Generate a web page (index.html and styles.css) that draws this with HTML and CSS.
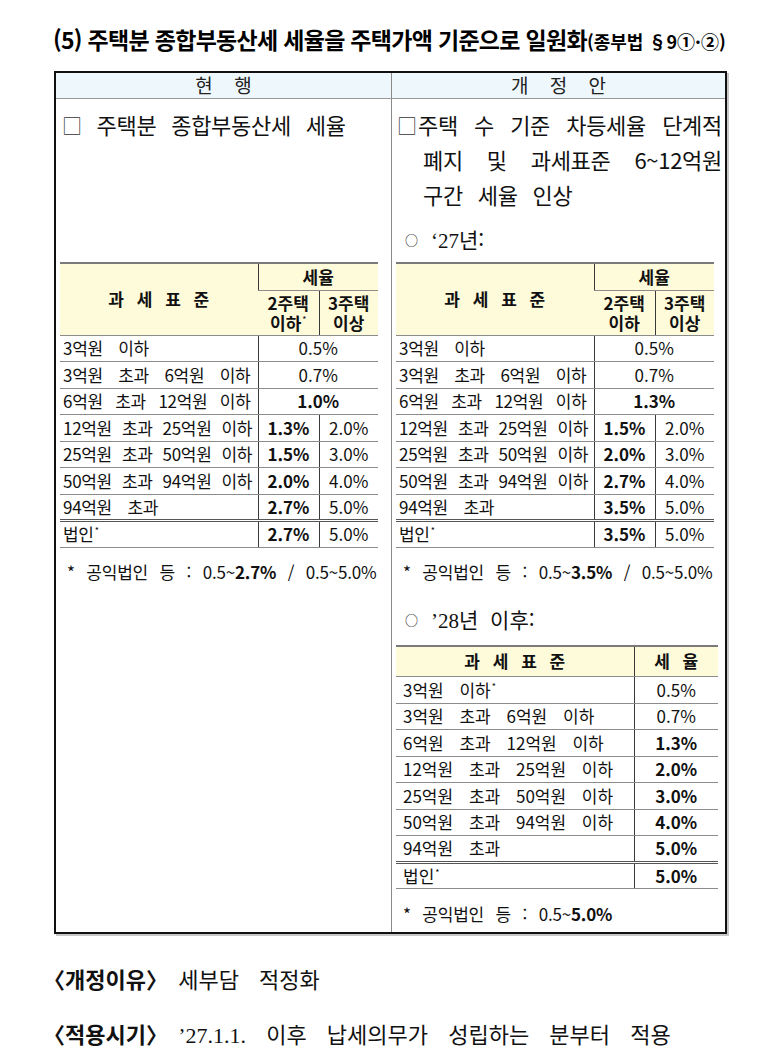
FILE: index.html
```html
<!DOCTYPE html>
<html lang="ko">
<head>
<meta charset="utf-8">
<title>주택분 종합부동산세 세율</title>
<link rel="stylesheet" href="styles.css">
</head>
<body>
<h1 class="title">(5) 주택분 종합부동산세 세율을 주택가액 기준으로 일원화<span class="law">(종부법 §9①·②)</span></h1>

<div class="box">
  <div class="hd">현 행</div>
  <div class="hd r">개 정 안</div>

  <div class="cell intro">
    <p class="lead left"><span class="sq">□</span> 주택분 종합부동산세 세율</p>
  </div>
  <div class="cell r intro">
    <p class="lead j"><span class="sq">□</span>주택 수 기준 차등세율 단계적</p>
    <p class="lead j ind">폐지 및 과세표준 6~12억원</p>
    <p class="lead ind">구간 세율 인상</p>
    <p class="sub"><span class="circ">○</span> <span class="yr">‘27</span>년:</p>
  </div>

  <div class="cell tcell">
    <table class="rt">
      <colgroup><col class="c1"><col class="c2"><col class="c3"></colgroup>
      <tr class="h1"><th rowspan="2" class="sp">과 세 표 준</th><th colspan="2">세율</th></tr>
      <tr class="h2"><th>2주택<br>이하<sup>*</sup></th><th>3주택<br>이상</th></tr>
      <tr><td class="k">3억원 이하</td><td colspan="2">0.5%</td></tr>
      <tr><td class="k">3억원 초과 6억원 이하</td><td colspan="2">0.7%</td></tr>
      <tr><td class="k m">6억원 초과 12억원 이하</td><td colspan="2"><b>1.0%</b></td></tr>
      <tr><td class="k t">12억원 초과 25억원 이하</td><td><b>1.3%</b></td><td>2.0%</td></tr>
      <tr><td class="k t">25억원 초과 50억원 이하</td><td><b>1.5%</b></td><td>3.0%</td></tr>
      <tr><td class="k t">50억원 초과 94억원 이하</td><td><b>2.0%</b></td><td>4.0%</td></tr>
      <tr class="dbl"><td class="k">94억원 초과</td><td><b>2.7%</b></td><td>5.0%</td></tr>
      <tr><td class="k">법인<sup>*</sup></td><td><b>2.7%</b></td><td>5.0%</td></tr>
    </table>
  </div>
  <div class="cell r tcell">
    <table class="rt">
      <colgroup><col class="c1"><col class="c2"><col class="c3"></colgroup>
      <tr class="h1"><th rowspan="2" class="sp">과 세 표 준</th><th colspan="2">세율</th></tr>
      <tr class="h2"><th>2주택<br>이하</th><th>3주택<br>이상</th></tr>
      <tr><td class="k">3억원 이하</td><td colspan="2">0.5%</td></tr>
      <tr><td class="k">3억원 초과 6억원 이하</td><td colspan="2">0.7%</td></tr>
      <tr><td class="k m">6억원 초과 12억원 이하</td><td colspan="2"><b>1.3%</b></td></tr>
      <tr><td class="k t">12억원 초과 25억원 이하</td><td><b>1.5%</b></td><td>2.0%</td></tr>
      <tr><td class="k t">25억원 초과 50억원 이하</td><td><b>2.0%</b></td><td>3.0%</td></tr>
      <tr><td class="k t">50억원 초과 94억원 이하</td><td><b>2.7%</b></td><td>4.0%</td></tr>
      <tr class="dbl"><td class="k">94억원 초과</td><td><b>3.5%</b></td><td>5.0%</td></tr>
      <tr><td class="k">법인<sup>*</sup></td><td><b>3.5%</b></td><td>5.0%</td></tr>
    </table>
  </div>

  <div class="cell note-cell">
    <p class="note">* 공익법인 등 : 0.5~<b>2.7%</b> / 0.5~5.0%</p>
  </div>
  <div class="cell r note-cell">
    <p class="note">* 공익법인 등 : 0.5~<b>3.5%</b> / 0.5~5.0%</p>
  </div>

  <div class="cell last"></div>
  <div class="cell r last">
    <p class="sub s2"><span class="circ">○</span> <span class="yr">’28</span>년 이후:</p>
    <table class="rt2">
      <colgroup><col class="d1"><col class="d2"></colgroup>
      <tr class="hh"><th class="sp">과 세 표 준</th><th class="sp">세 율</th></tr>
      <tr><td class="k">3억원 이하<sup>*</sup></td><td>0.5%</td></tr>
      <tr><td class="k">3억원 초과 6억원 이하</td><td>0.7%</td></tr>
      <tr><td class="k">6억원 초과 12억원 이하</td><td><b>1.3%</b></td></tr>
      <tr><td class="k">12억원 초과 25억원 이하</td><td><b>2.0%</b></td></tr>
      <tr><td class="k">25억원 초과 50억원 이하</td><td><b>3.0%</b></td></tr>
      <tr><td class="k">50억원 초과 94억원 이하</td><td><b>4.0%</b></td></tr>
      <tr class="dbl"><td class="k">94억원 초과</td><td><b>5.0%</b></td></tr>
      <tr><td class="k">법인<sup>*</sup></td><td><b>5.0%</b></td></tr>
    </table>
    <p class="note n2">* 공익법인 등 : 0.5~<b>5.0%</b></p>
  </div>
</div>

<p class="para p1"><span class="lbl"><span class="bo">〈</span>개정이유<span class="bc">〉</span></span> 세부담 적정화</p>
<p class="para p2"><span class="lbl"><span class="bo">〈</span>적용시기<span class="bc">〉</span></span> <span class="yr">’27.1.1.</span> 이후 납세의무가 성립하는 분부터 적용</p>
</body>
</html>
```
FILE: styles.css
```css
* { box-sizing: border-box; }

body {
  margin: 0;
  background: #fff;
  color: #111;
  font-family: "Noto Sans CJK KR", "Noto Sans", sans-serif;
}

p { margin: 0; }

.title {
  margin: 0;
  height: 71px;
  padding: 22px 0 0 53px;
  font-size: 23px;
  line-height: 34px;
  font-weight: 700;
  letter-spacing: -0.7px;
  white-space: nowrap;
  color: #000;
}

.law {
  font-size: 18px;
  letter-spacing: 0;
}

.box {
  margin-left: 54px;
  width: 673px;
  border: 2px solid #111;
  box-shadow: 2px 2px 0 #c8c8c8;
  display: grid;
  grid-template-columns: 335px 334px;
}

.r { border-left: 1px solid #8a8a8a; }

.hd {
  height: 26px;
  background: #eef8fc;
  border-bottom: 1px solid #9a9a9a;
  text-align: center;
  font-size: 19px;
  line-height: 24px;
  word-spacing: 16px;
  color: #222;
}

.intro { padding-top: 8px; padding-bottom: 5px; }

.lead {
  height: 35px;
  font-size: 22px;
  line-height: 35px;
  letter-spacing: -0.3px;
  word-spacing: 9px;
  white-space: nowrap;
}

.lead.left { padding-left: 6px; }

.cell.r .lead { padding-left: 5px; padding-right: 3px; }

.lead.j {
  text-align: justify;
  text-align-last: justify;
  white-space: normal;
}

.cell.r .lead.ind { padding-left: 31px; }

.sq {
  font-size: 20px;
  color: #333;
  font-weight: 300;
}

.sub {
  height: 35px;
  margin-top: 10px;
  padding-left: 13px;
  font-size: 21px;
  line-height: 35px;
  word-spacing: 6px;
}

.circ {
  font-size: 13px;
  vertical-align: 3px;
  margin-right: 1px;
}

.yr { font-family: "Liberation Serif", "Noto Sans CJK KR", serif; }

/* rate tables */
.tcell { padding-left: 4px; }

.rt, .rt2 {
  border-collapse: collapse;
  border-top: 2px solid #7a7a7a;
  font-size: 17px;
  table-layout: fixed;
}

.rt { width: 318px; }
.rt .c1 { width: 198px; }
.rt .c2 { width: 61px; }
.rt .c3 { width: 59px; }

.rt th, .rt td, .rt2 th, .rt2 td {
  padding: 0;
  border-bottom: 1px solid #8c8c8c;
  border-left: 1px solid #3a3a3a;
  text-align: center;
  white-space: nowrap;
  line-height: 22px;
}

.rt th:first-child, .rt td:first-child,
.rt2 th:first-child, .rt2 td:first-child { border-left: none; }

.rt th, .rt2 th {
  background: #fefbdb;
  font-weight: 700;
}

.rt .h2 th { line-height: 20px; }

.rt .h1 { height: 27px; }
.rt .h2 { height: 45px; }
.rt tr, .rt2 tr { height: 26.5px; }

.sp { word-spacing: 8px; }

td.k {
  text-align: left;
  padding-left: 3px;
  word-spacing: 11px;
  letter-spacing: -0.3px;
}

td.k.m { word-spacing: 8px; }
td.k.t { word-spacing: 5.5px; }

.dbl td { border-bottom: 3px double #555; }

sup {
  font-size: 9px;
  line-height: 0;
  vertical-align: 7px;
  font-weight: 400;
  margin-left: 1px;
}

.note-cell { padding-top: 9px; }

.note {
  height: 30px;
  padding-left: 11px;
  font-size: 17px;
  line-height: 30px;
  word-spacing: 7px;
  letter-spacing: -0.2px;
  white-space: nowrap;
}

.last { padding-bottom: 3px; }

.s2 { margin-top: 15px; }

.rt2 {
  margin-top: 8px;
  margin-left: 4px;
  width: 322px;
}
.rt2 .d1 { width: 238px; }
.rt2 .d2 { width: 84px; }
.rt2 .hh { height: 31px; }
.rt2 td.k { padding-left: 7px; word-spacing: 11px; letter-spacing: 0; }

.n2 { margin-top: 10px; }

/* bottom lines */
.para {
  height: 40px;
  margin: 0;
  padding-left: 53px;
  font-size: 22px;
  line-height: 40px;
  white-space: nowrap;
  word-spacing: 14px;
}

.p1 { margin-top: 24px; }
.p2 { margin-top: 15px; }

.lbl {
  font-weight: 700;
  letter-spacing: 0;
  word-spacing: 0;
}

.bo { margin-left: -10px; }
.bc { margin-right: -10px; }
```
